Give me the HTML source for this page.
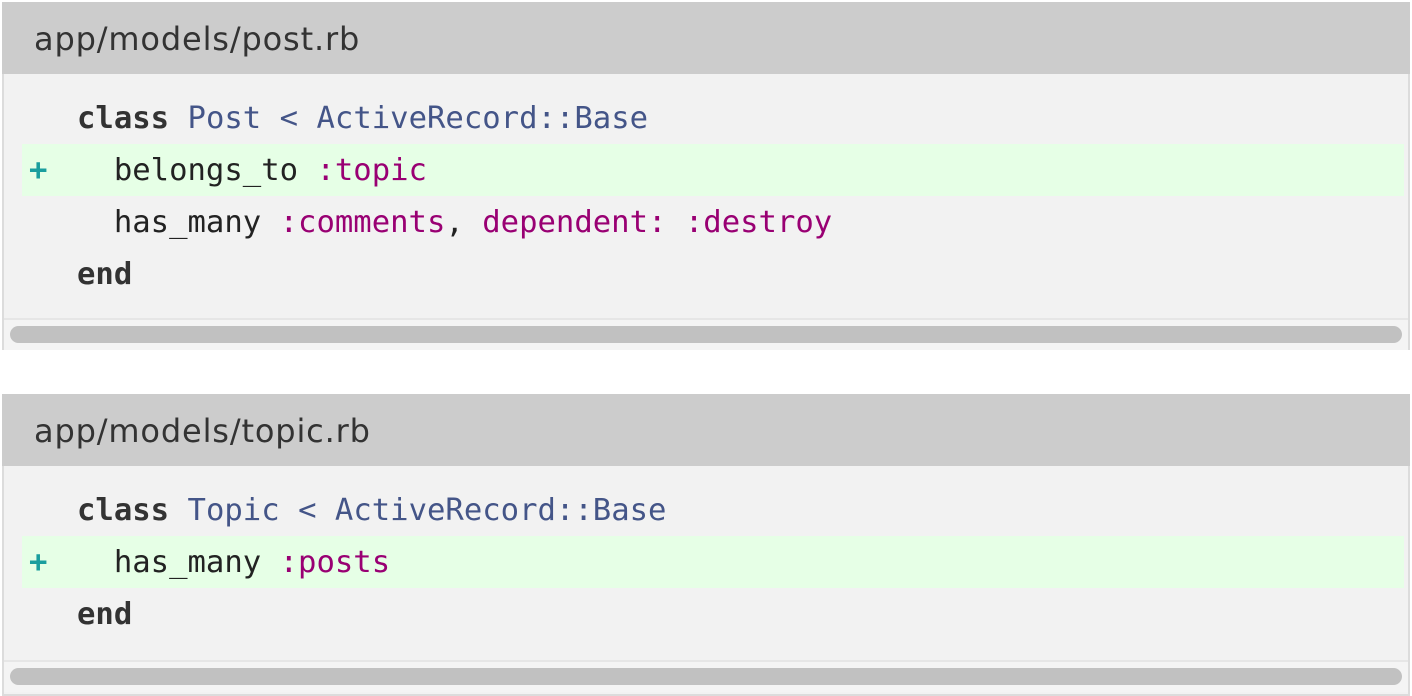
<!DOCTYPE html>
<html><head><style>
body{margin:0;background:#fff;width:1412px;height:680px;overflow:hidden;}
.hd{position:absolute;left:2px;width:1408px;height:72px;background:#cccccc;color:#333;font-family:"DejaVu Sans","Liberation Sans",sans-serif;font-size:32px;letter-spacing:0.85px;line-height:74px;box-sizing:border-box;padding-left:32px;}
.box{position:absolute;left:2px;width:1408px;background:#f2f2f2;border:2px solid #dcdcdc;border-top:none;box-sizing:border-box;}
.ln{position:absolute;left:18px;right:4px;height:52px;font-family:"DejaVu Sans Mono","Liberation Mono",monospace;font-size:30.6px;line-height:53px;white-space:pre;color:#222;}
.ln span.c{position:absolute;left:55px;}
.add{background:#e6ffe6;}
.pl{position:absolute;left:7px;color:#1a9e9e;font-weight:bold;}
.k{font-weight:bold;color:#333}
.t{color:#445588}
.s{color:#990073}
.sb{position:absolute;left:0;right:0;height:30px;border-top:2px solid #e6e6e6;background:#f4f4f4;}
.th{position:absolute;left:6px;right:6px;top:6px;height:17px;border-radius:9px;background:#c1c1c1;}
</style></head><body>
<div class="hd" style="top:2px">app/models/post.rb</div>
<div class="box" style="top:74px;height:276px">
 <div class="ln" style="top:18px"><span class="c"><span class="k">class</span> <span class="t">Post</span> <span class="t">&lt;</span> <span class="t">ActiveRecord::Base</span></span></div>
 <div class="ln add" style="top:70px"><span class="pl">+</span><span class="c">  belongs_to <span class="s">:topic</span></span></div>
 <div class="ln" style="top:122px"><span class="c">  has_many <span class="s">:comments</span>, <span class="s">dependent:</span> <span class="s">:destroy</span></span></div>
 <div class="ln" style="top:174px"><span class="c"><span class="k">end</span></span></div>
 <div class="sb" style="top:244px"><div class="th"></div></div>
</div>
<div class="hd" style="top:394px">app/models/topic.rb</div>
<div class="box" style="top:466px;height:230px">
 <div class="ln" style="top:18px"><span class="c"><span class="k">class</span> <span class="t">Topic</span> <span class="t">&lt;</span> <span class="t">ActiveRecord::Base</span></span></div>
 <div class="ln add" style="top:70px"><span class="pl">+</span><span class="c">  has_many <span class="s">:posts</span></span></div>
 <div class="ln" style="top:122px"><span class="c"><span class="k">end</span></span></div>
 <div class="sb" style="top:194px"><div class="th"></div></div>
</div>
</body></html>
